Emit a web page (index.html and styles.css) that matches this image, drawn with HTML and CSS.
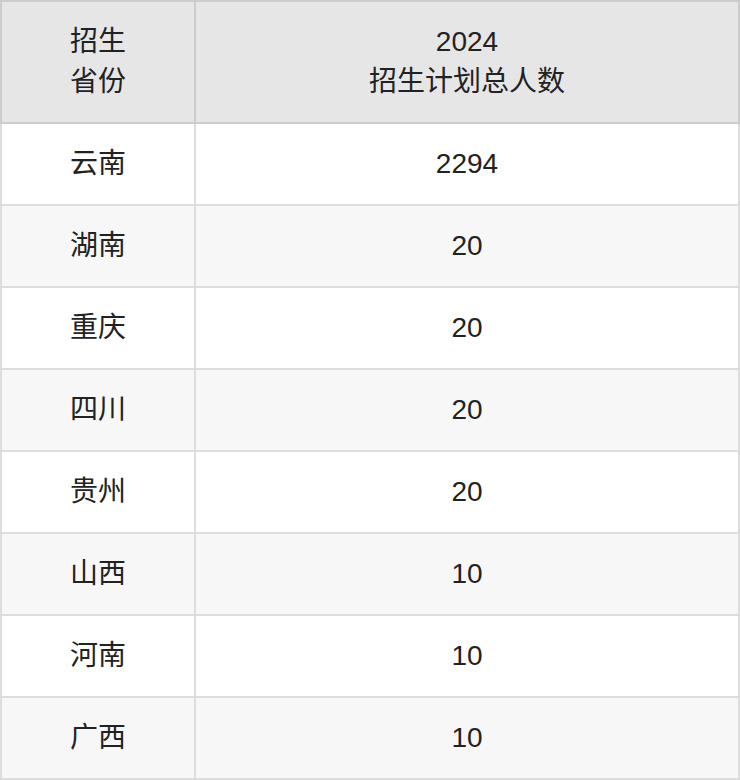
FILE: index.html
```html
<!DOCTYPE html>
<html lang="zh-CN">
<head>
<meta charset="utf-8">
<link rel="stylesheet" href="styles.css">
</head>
<body>
<table class="plan">
  <thead>
    <tr>
      <th class="col-prov">招生<br>省份</th>
      <th class="col-num">2024<br>招生计划总人数</th>
    </tr>
  </thead>
  <tbody>
    <tr><td>云南</td><td>2294</td></tr>
    <tr><td>湖南</td><td>20</td></tr>
    <tr><td>重庆</td><td>20</td></tr>
    <tr><td>四川</td><td>20</td></tr>
    <tr><td>贵州</td><td>20</td></tr>
    <tr><td>山西</td><td>10</td></tr>
    <tr><td>河南</td><td>10</td></tr>
    <tr><td>广西</td><td>10</td></tr>
  </tbody>
</table>
</body>
</html>
```
FILE: styles.css
```css
html, body {
  margin: 0;
  padding: 0;
  background: #ffffff;
}

.plan {
  width: 740px;
  border-collapse: collapse;
  font-family: "Liberation Sans", "Noto Sans CJK SC", sans-serif;
  font-size: 28px;
  line-height: 40px;
  color: #222222;
  text-align: center;
}

.plan th {
  font-weight: normal;
  background: #e6e6e6;
  border: 2px solid #cccccc;
  padding: 20px 0;
}

.plan td {
  border: 2px solid #dddddd;
  padding: 20px 0;
}

.plan .col-prov {
  width: 192px;
}

.plan tbody tr:nth-child(even) td {
  background: #f7f7f7;
}
```
